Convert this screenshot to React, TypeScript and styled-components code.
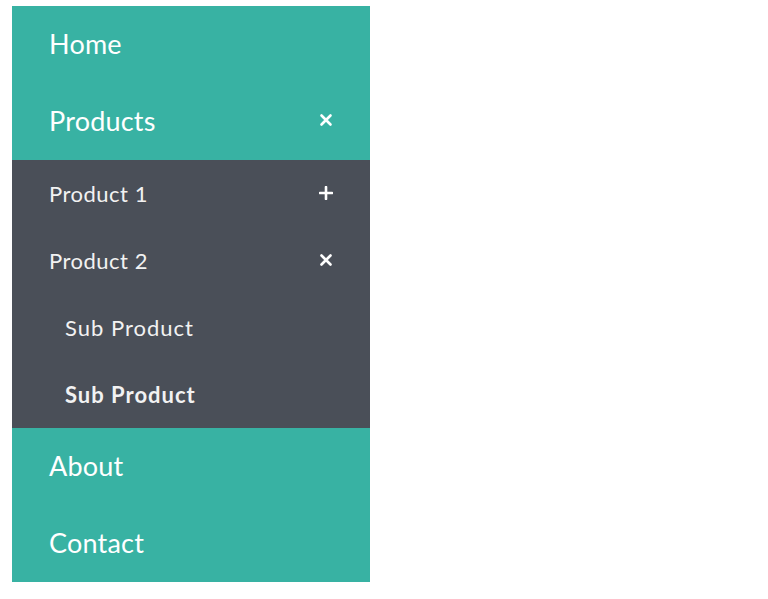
import React from "react";
import styled, { createGlobalStyle } from "styled-components";

const Global = createGlobalStyle`
  html, body { margin: 0; padding: 0; background: #ffffff; }
  body { font-family: "Lato", "Open Sans", sans-serif; }
`;

const Page = styled.div`
  padding: 6px 12px;
`;

const Menu = styled.ul`
  list-style: none;
  margin: 0;
  padding: 0;
  width: 358px;
  background: #38b2a3;
`;

const MainItem = styled.li`
  display: flex;
  align-items: center;
  justify-content: space-between;
  height: 77px;
  padding: 0 37px 3px 37px;
  box-sizing: border-box;
  color: #ffffff;
  font-size: 27px;
  font-weight: 400;
  letter-spacing: 0.2px;
`;

const SubMenu = styled.ul`
  list-style: none;
  margin: 0;
  padding: 0;
  background: #4a4f58;
`;

const SubItem = styled.li<{ $indent?: boolean; $bold?: boolean }>`
  display: flex;
  align-items: center;
  justify-content: space-between;
  height: 67px;
  padding: 0 37px 1px ${(p) => (p.$indent ? 53 : 37)}px;
  box-sizing: border-box;
  color: #f2f2f2;
  font-size: 22px;
  font-weight: ${(p) => (p.$bold ? 700 : 400)};
  letter-spacing: ${(p) => (p.$indent ? "1px" : "0.5px")};
`;

const Icon = styled.svg`
  width: 14px;
  height: 14px;
  display: block;
`;

const Close = () => (
  <Icon viewBox="0 0 14 14">
    <path d="M2.5 2.5 L11.5 11.5 M11.5 2.5 L2.5 11.5" stroke="#fff" strokeWidth="2.6" strokeLinecap="round" />
  </Icon>
);

const Plus = () => (
  <Icon viewBox="0 0 14 14">
    <path d="M7 1 V13 M1 7 H13" stroke="#fff" strokeWidth="2.6" strokeLinecap="round" />
  </Icon>
);

export default function App() {
  return (
    <>
      <Global />
      <Page>
        <Menu>
          <MainItem>Home</MainItem>
          <MainItem>
            Products
            <Close />
          </MainItem>
          <SubMenu>
            <SubItem>
              Product 1
              <Plus />
            </SubItem>
            <SubItem>
              Product 2
              <Close />
            </SubItem>
            <SubItem $indent>Sub Product</SubItem>
            <SubItem $indent $bold>Sub Product</SubItem>
          </SubMenu>
          <MainItem>About</MainItem>
          <MainItem>Contact</MainItem>
        </Menu>
      </Page>
    </>
  );
}
